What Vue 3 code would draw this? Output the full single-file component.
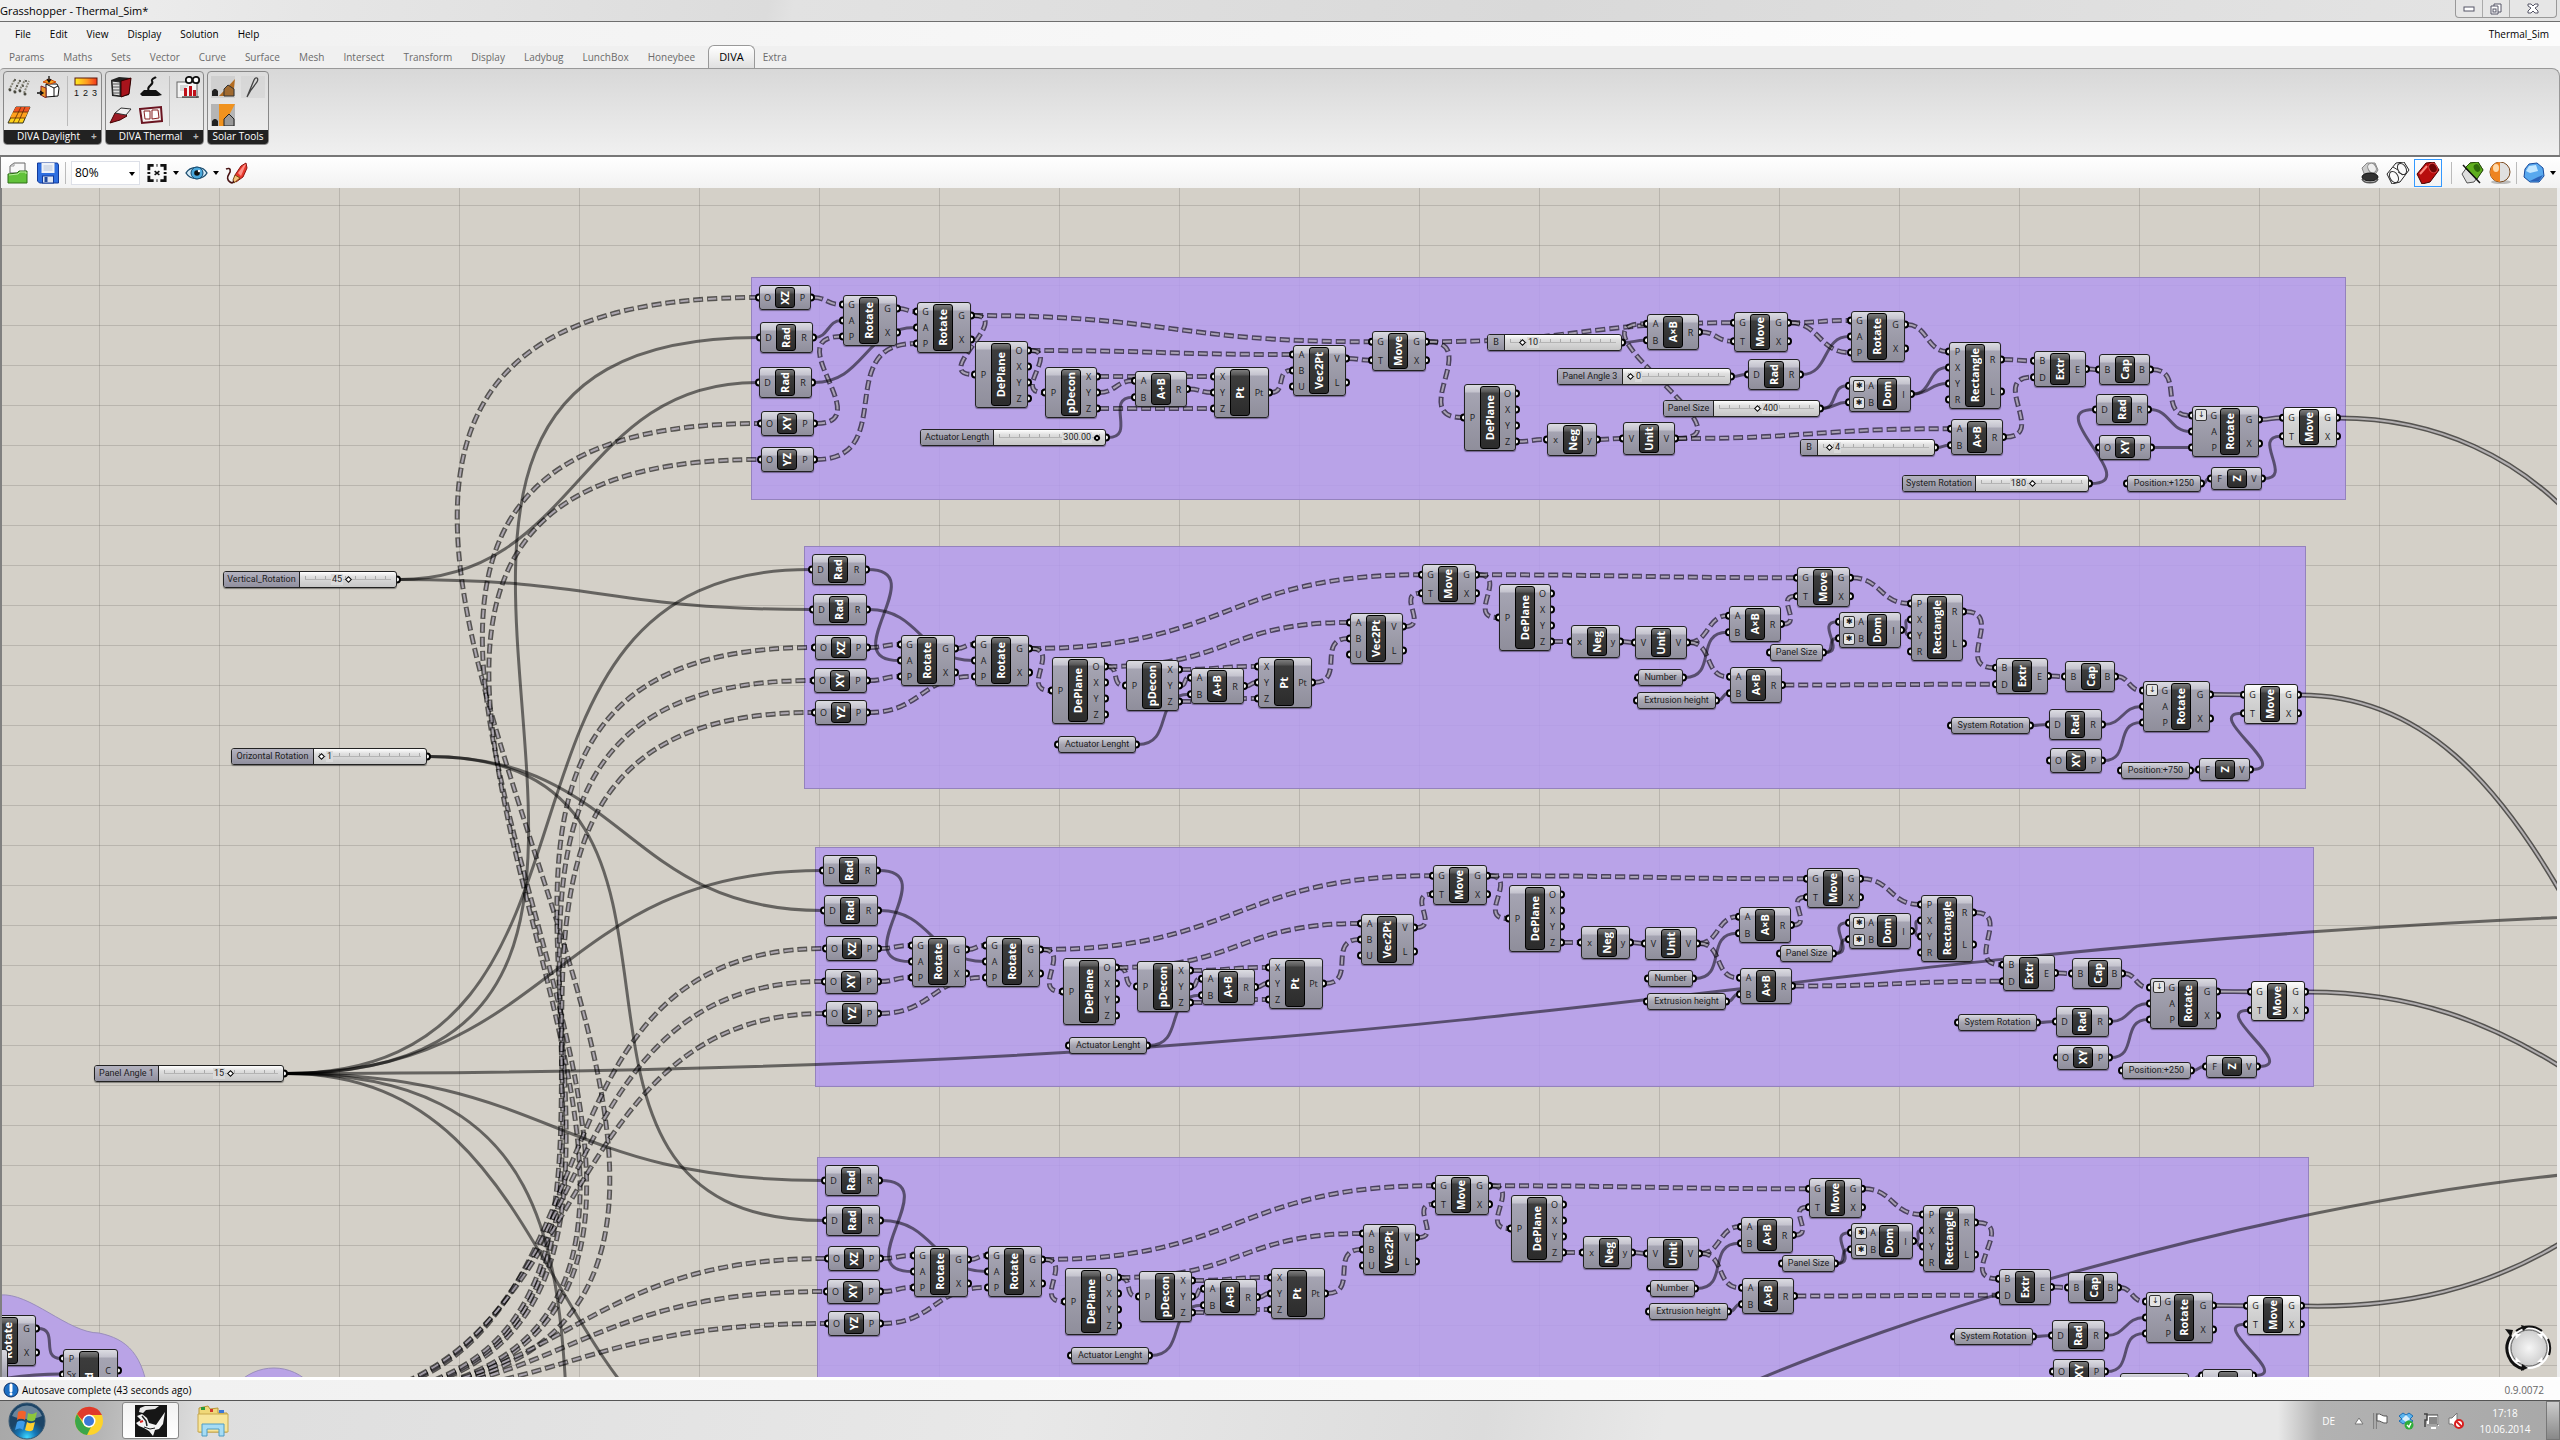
<script setup>
import { ref } from 'vue'

const menus = ['File', 'Edit', 'View', 'Display', 'Solution', 'Help']
const tabs = ['Params', 'Maths', 'Sets', 'Vector', 'Curve', 'Surface', 'Mesh', 'Intersect', 'Transform', 'Display', 'Ladybug', 'LunchBox', 'Honeybee', 'DIVA', 'Extra']
const zoom = ref('80%')

/* ---------- icon artwork (inner SVG, 24 x 22 box) ---------- */
const art = {
  sensors: '<g stroke="#8a897c" stroke-width="2" stroke-dasharray="2 1" fill="none"><path d="M2 14 8 3M7 16 13 4M12 15 18 4M17 17 22 5"/></g><g fill="#4a4a40"><circle cx="3" cy="14" r="1.4"/><circle cx="8" cy="16" r="1.5"/><circle cx="13" cy="15" r="1.4"/><circle cx="18" cy="18" r="1.5"/><circle cx="8" cy="4" r="1"/><circle cx="13" cy="5" r="1"/><circle cx="19" cy="5" r="1"/><circle cx="10" cy="10" r="1"/><circle cx="16" cy="10" r="1"/></g>',
  daybox: '<path d="M9 8 20 8 22 12 21 20 9 21Z" fill="#fff" stroke="#111"/><path d="M9 8 17 12 21 10M17 12V21" fill="none" stroke="#111"/><path d="M6 6 12 3 19 6 13 8Z" fill="#f5a623" stroke="#c40"/><path d="M4 10 9 12V22L4 19Z" fill="#e9962a" stroke="#822"/><path d="M12 0V5M10 3 12 6 14 3M0 17H5M3 15 6 17 3 19" stroke="#111" fill="none" stroke-width="1.3"/>',
  scale: '<defs><linearGradient id="sc"><stop stop-color="#ffee20"/><stop offset=".55" stop-color="#ff9a20"/><stop offset="1" stop-color="#f3361c"/></linearGradient></defs><rect x="1" y="2" width="22" height="7" fill="url(#sc)" stroke="#5a1a10"/><g font-size="9" font-family="Liberation Sans,sans-serif" fill="#111"><text x="0" y="20">1</text><text x="9" y="20">2</text><text x="18" y="20">3</text></g>',
  grid: '<path d="M9 3H23L16 19H1Z" fill="#ffd21a" stroke="#332"/><path d="M9 3H23L21 8H6Z" fill="#ee5522"/><path d="M6 8H21L18 14H3Z" fill="#ffa01c"/><path d="M14 3 6 19M18 3 11 19M6 8H21M3 14H18" stroke="#5c2a08" fill="none" stroke-width=".8"/>',
  book: '<path d="M2 4 10 1 22 2 20 19 12 21 3 20Z" fill="#222"/><path d="M12 5 22 2 20 18 12 21Z" fill="#a8141c" stroke="#300"/><path d="M3 5 11 6V20L4 19Z" fill="#ddd" stroke="#222"/><path d="M4 8H11M4 11H11M4 14H11M4 17H11" stroke="#555"/>',
  steam: '<path d="M5 14 17 14 23 19 19 20 3 20 1 18Z" fill="#111"/><path d="M10 15C6 10 16 9 13 5 12 3 16 2 17 1" stroke="#111" stroke-width="2" fill="none"/>',
  chart: '<rect x="1" y="6" width="20" height="16" fill="#f4f4f4" stroke="#666"/><path d="M4 10H12M4 12H10M4 14H10" stroke="#bbb"/><path d="M8 12H11V20H8ZM13 10H16V20H13ZM17 14H20V20H17Z" fill="#c0101a"/><circle cx="13" cy="4" r="3.2" fill="#fff" stroke="#111" stroke-width="1.8"/><circle cx="20" cy="4" r="3.2" fill="#fff" stroke="#111" stroke-width="1.8"/><path d="M6 21H23" stroke="#111"/>',
  brick: '<path d="M1 19 6 9 14 8 18 12 11 16Z" fill="#9c1a24" stroke="#400"/><path d="M6 9 12 4 22 5 17 11Z" fill="#efefef" stroke="#333"/>',
  window: '<path d="M1 5 22 3 23 17 3 19Z" fill="#f6f0f0" stroke="#6a1420" stroke-width="2"/><path d="M5 7 11 7V15L6 15ZM13 6H19L20 14 13 15Z" fill="#fff" stroke="#822"/>',
  solarA: '<rect width="24" height="22" fill="#c9c9c9" opacity=".7"/><path d="M24 3 22 20 8 20Z" fill="#b26c22"/><path d="M13 20V13L17 9 23 13V20Z" fill="#a06a30" stroke="#333"/><path d="M1 20V15L3 13H5L7 15V20Z" fill="#222"/>',
  needle: '<rect width="24" height="22" fill="#d2d2d2" opacity=".6"/><path d="M6 21 13 4C15 0 18 2 16 6L10 14 6 21Z" fill="none" stroke="#444" stroke-width="1.3"/>',
  solarB: '<rect width="24" height="24" fill="#b5b5b5"/><path d="M8 0H24L16 15 12 24 8 24Z" fill="#f0921e"/><path d="M13 22V15L18 10 23 15V22Z" fill="#999" stroke="#222"/><path d="M1 22V17L3 15H5L7 17V22Z" fill="#222"/>',
  open: '<path d="M3 11V4L7 1H18V11Z" fill="#f8f8f8" stroke="#666"/><path d="M7 1V4H3" fill="none" stroke="#999"/><path d="M1 21V12L10 11 12 9H20V21Z" fill="#62c23a" stroke="#2c6e16"/><path d="M2 13 11 12 13 10H19V12" stroke="#b9ee9c" fill="none"/>',
  save: '<path d="M1 1H21L22 3V21H3L1 19Z" fill="#2f6fe0" stroke="#123a9a"/><rect x="5" y="1" width="13" height="10" fill="#eef2f8"/><path d="M7 4H16M7 6H16M7 8H16" stroke="#b8c4d8"/><rect x="6" y="14" width="11" height="7" fill="#dfe6f2" stroke="#123a9a"/><rect x="8" y="15" width="3" height="5" fill="#224a9c"/>',
  fit: '<path d="M3 8V3H8M15 3H20V8M3 14V19H8M15 19H20V14M11 3H12M11 19H12M3 10V12M20 10V12" stroke="#111" stroke-width="3" fill="none"/><path d="M9 9 14 13M14 9 9 13" stroke="#111" stroke-width="1.6"/>',
  eye: '<path d="M1 11C5 4 18 3 22 11 18 18 6 19 1 11Z" fill="#d6ecf8" stroke="#1d4e70" stroke-width="1.4"/><circle cx="12" cy="11" r="6" fill="#4aa8dc" stroke="#14486e"/><circle cx="12" cy="11" r="2.8" fill="#111"/><circle cx="14" cy="9" r="1.2" fill="#fff"/>',
  pencil: '<path d="M10 13 16 4 21 1 22 6 18 15 11 20Z" fill="#e8382c" stroke="#8a1410"/><path d="M13 11 19 3 21 2 16 14Z" fill="#ff9088"/><path d="M10 13 15 16 9 21 8 18Z" fill="#f5c27a" stroke="#7a4a10"/><path d="M1 7C6 5 6 9 4 12S2 18 5 20 8 20 9 19" fill="none" stroke="#4a1414" stroke-width="1.6"/>',
  tubeDark: '<path d="M4 6 9 1 17 1 20 8 16 14H7Z" fill="#ccc" stroke="#888"/><ellipse cx="14" cy="6" rx="4" ry="5" transform="rotate(-30 14 6)" fill="#eee" stroke="#888"/><ellipse cx="12" cy="15" rx="8" ry="4" fill="#333" stroke="#111"/><path d="M4 17C6 22 18 22 20 17" fill="none" stroke="#555" stroke-width="1.5"/>',
  tubeWire: '<path d="M1 12 10 1 18 0 23 8 14 20 6 22Z" fill="#fafafa" stroke="#222"/><ellipse cx="16" cy="7" rx="4" ry="6" transform="rotate(-30 16 7)" fill="none" stroke="#333"/><ellipse cx="8" cy="15" rx="4" ry="6" transform="rotate(-30 8 15)" fill="none" stroke="#333"/><path d="M12 10 17 13M7 5 12 8" stroke="#333"/>',
  tubeRed: '<path d="M1 12 10 1 18 0 23 8 14 20 6 22Z" fill="#b80d0d" stroke="#400"/><ellipse cx="17" cy="6" rx="4" ry="5" transform="rotate(-30 17 6)" fill="#6e0505" stroke="#d44"/><path d="M4 12 11 4" stroke="#ff8a80" stroke-width="2"/>',
  tubeGreen: '<path d="M2 12 10 1 18 0 23 8 14 20 7 21Z" fill="#ddd" stroke="#555"/><path d="M5 6 10 1 18 0 23 8 17 17Z" fill="#5fae1e" stroke="#254d08"/><ellipse cx="17" cy="6" rx="3" ry="4" transform="rotate(-30 17 6)" fill="#2e6a0a"/><path d="M3 3 20 21" stroke="#111" stroke-width="1.5"/>',
  sphereHalf: '<ellipse cx="13" cy="20" rx="10" ry="2" fill="#bbb"/><circle cx="12" cy="10" r="10" fill="#e0e0e0" stroke="#7a4a20"/><path d="M12 0A10 10 0 0 0 12 20Z" fill="#ee8420"/><ellipse cx="8" cy="6" rx="3" ry="4" fill="#ffd9a8"/>',
  sphereBlue: '<path d="M7 2 15 1 21 6 22 14 17 20 8 20 2 15 3 7Z" fill="#58a8ee" stroke="#174a9c"/><path d="M7 4 14 3 16 9 8 11 4 9Z" fill="#c2e6ff"/><path d="M8 19 17 19 21 13 16 15Z" fill="#2c62b8"/>'
}

const panels = [
  { title: 'DIVA Daylight', plus: true, cols: [['sensors', 'grid'], ['daybox'], null, ['scale']] },
  { title: 'DIVA Thermal', plus: true, cols: [['book', 'brick'], ['steam', 'window'], null, ['chart']] },
  { title: 'Solar Tools', plus: false, cols: [['solarA', 'solarB'], ['needle']] }
]

/* ---------- canvas data, in screen coordinates ---------- */
const OX = 2
const OY = 188

const groups = [
  [751, 277, 1595, 223], [804, 546, 1502, 243], [815, 847, 1499, 240], [817, 1157, 1492, 300]
]

const nodes = []
const wires = []
const at = {}

function add(id, label, x, y, w, h, ins, outs, kind = 'c') {
  const n = { id, label, x, y, w, h, ins: ins ? ins.split(' ') : [], outs: outs ? outs.split(' ') : [], kind }
  nodes.push(n)
  at[id] = n
  return n
}
function slider(id, label, x, y, w, lw, value, knob, side, round) {
  Object.assign(add(id, label, x, y, w, 17, '', 'v', 's'), {
    lw, value, knob, side, round, pos: Math.round(((knob - lw - 8) / (w - lw - 17)) * 1000) / 10
  })
}
function portY(n, list, i) {
  return n.y + 1.5 + ((n.h - 3) * (i + 0.5)) / Math.max(list.length, 1)
}
const outP = (id, i = 0) => [at[id].x + at[id].w + 2, portY(at[id], at[id].outs, i)]
const inP = (id, i = 0) => [at[id].x - 2, portY(at[id], at[id].ins, i)]

function curve([x1, y1], [x2, y2], k = 0.72) {
  const c = Math.max(Math.abs(x2 - x1) / 2, Math.abs(y2 - y1) * k)
  return `M${x1} ${y1}C${x1 + c} ${y1} ${x2 - c} ${y2} ${x2} ${y2}`
}
function wire(a, b, type, k) {
  wires.push({ d: curve(a, b, k), type })
}
/* "from.out>to.in" pairs, separated by spaces */
function link(prefix, type, spec) {
  spec.split(' ').forEach((s) => {
    const [f, t] = s.split('>')
    const [fi, fo = 0] = f.split('.')
    const [ti, to = 0] = t.split('.')
    wire(outP(prefix + fi, +fo), inP(prefix + ti, +to), type)
  })
}

/* sliders that drive every row */
slider('VR', 'Vertical_Rotation', 223, 571, 174, 76, '45', 125, 'l')
slider('OR', 'Orizontal Rotation', 231, 748, 196, 82, '1', 90, 'r')
slider('PA', 'Panel Angle 1', 94, 1065, 190, 64, '15', 136, 'l')

/* first row */
add('a-xz', 'XZ', 759, 285, 52, 25, 'O', 'P')
add('a-r1', 'Rad', 760, 322, 53, 31, 'D', 'R')
add('a-r2', 'Rad', 759, 367, 53, 31, 'D', 'R')
add('a-xy', 'XY', 761, 411, 53, 25, 'O', 'P')
add('a-yz', 'YZ', 761, 447, 53, 25, 'O', 'P')
add('a-ro1', 'Rotate', 843, 295, 54, 51, 'G A P', 'G X')
add('a-ro2', 'Rotate', 917, 302, 54, 51, 'G A P', 'G X')
add('a-de', 'DePlane', 975, 341, 53, 67, 'P', 'O X Y Z')
add('a-pd', 'pDecon', 1045, 367, 52, 51, 'P', 'X Y Z')
add('a-pt', 'Pt', 1214, 367, 55, 51, 'X Y Z', 'Pt')
add('a-ab', 'A+B', 1135, 371, 52, 36, 'A B', 'R')
add('a-ve', 'Vec2Pt', 1293, 345, 53, 51, 'A B U', 'V L')
add('a-mo', 'Move', 1372, 331, 54, 40, 'G T', 'G X')
slider('a-al', 'Actuator Length', 920, 429, 186, 73, '300.00', 177, 'l', true)
add('a-d2', 'DePlane', 1464, 384, 52, 67, 'P', 'O X Y Z')
add('a-ne', 'Neg', 1547, 423, 50, 33, 'x', 'y')
add('a-un', 'Unit', 1623, 422, 52, 33, 'V', 'V')
slider('a-b1', 'B', 1487, 334, 135, 17, '10', 35, 'r')
slider('a-p3', 'Panel Angle 3', 1557, 368, 174, 65, '0', 73, 'r')
slider('a-ps', 'Panel Size', 1663, 400, 157, 50, '400', 94, 'r')
slider('a-b2', 'B', 1800, 439, 135, 17, '4', 29, 'r')
slider('a-sr', 'System Rotation', 1902, 475, 187, 73, '180', 130, 'l')
add('a-x1', 'A×B', 1647, 314, 52, 36, 'A B', 'R')
add('a-m2', 'Move', 1734, 312, 54, 40, 'G T', 'G X')
add('a-r3', 'Rad', 1748, 359, 52, 31, 'D', 'R')
add('a-ro3', 'Rotate', 1851, 311, 54, 51, 'G A P', 'G X')
add('a-do', 'Dom', 1849, 376, 62, 36, '*A *B', 'I')
add('a-re', 'Rectangle', 1949, 342, 52, 67, 'P X Y R', 'R L')
add('a-x2', 'A×B', 1951, 419, 52, 36, 'A B', 'R')
add('a-ex', 'Extr', 2034, 351, 52, 36, 'B D', 'E')
add('a-ca', 'Cap', 2099, 354, 51, 31, 'B', 'B')
add('a-r4', 'Rad', 2096, 394, 52, 31, 'D', 'R')
add('a-x3', 'XY', 2099, 435, 52, 25, 'O', 'P')
add('a-ro4', 'Rotate', 2192, 406, 67, 51, '↓G A P', 'G X')
add('a-m4', 'Move', 2283, 407, 54, 40, 'G T', 'G X', 'w')
add('a-z', 'Z', 2211, 467, 51, 23, 'F', 'V')
add('a-po', 'Position:+1250', 2127, 475, 74, 17, 'i', 'o', 'p')

link('a-', 'dash', 'xz>ro1 xy>ro1.2 yz>ro2.2 ro1>ro2 ro2>mo ro2>de de>ve de>pd pd>pt pd.1>ab ab>pt.1 pd.2>pt.2 pt>ve.1 ve>mo.1 mo>d2 mo>m2 un>x1 x1>m2.1 d2.3>ne ne>un un>x2 m2>ro3 m2>ro3.2 ro3>re x2>ex.1 re>ex ex>ca ca>ro4')
link('a-', 'solid', 'r1>ro1.1 r2>ro2.1 al>ab.1 b1>x1.1 p3>r3 r3>ro3.1 ps>do ps>do.1 do>re.1 do>re.2 b2>x2.1 sr>r4 r4>ro4.1 x3>ro4.2 po>z z>m4.1')
link('a-', 'double', 'ro4>m4')

/* the three rows below share one arrangement */
function row(p, dx, dy, mx, tx, ty, pos, px, py) {
  const l = (id, label, x, y, ...r) => add(p + id, label, x + dx, y + dy, ...r)
  const m = (id, label, x, y, ...r) => add(p + id, label, x + mx, y + dy, ...r)
  const t = (id, label, x, y, ...r) => add(p + id, label, x + tx, y + ty, ...r)
  l('r1', 'Rad', 812, 554, 54, 31, 'D', 'R')
  l('r2', 'Rad', 813, 594, 54, 31, 'D', 'R')
  l('xz', 'XZ', 815, 635, 52, 25, 'O', 'P')
  l('xy', 'XY', 814, 668, 53, 25, 'O', 'P')
  l('yz', 'YZ', 815, 700, 52, 25, 'O', 'P')
  l('ro1', 'Rotate', 901, 635, 54, 51, 'G A P', 'G X')
  l('ro2', 'Rotate', 975, 635, 54, 51, 'G A P', 'G X')
  l('de', 'DePlane', 1052, 657, 53, 67, 'P', 'O X Y Z')
  l('pd', 'pDecon', 1126, 660, 53, 51, 'P', 'X Y Z')
  l('ab', 'A+B', 1191, 668, 53, 36, 'A B', 'R')
  l('pt', 'Pt', 1258, 657, 54, 51, 'X Y Z', 'Pt')
  l('al', 'Actuator Lenght', 1058, 736, 78, 17, 'i', 'o', 'p')
  l('ve', 'Vec2Pt', 1350, 613, 53, 51, 'A B U', 'V L')
  l('mo', 'Move', 1422, 564, 54, 40, 'G T', 'G X')
  m('d2', 'DePlane', 1499, 584, 52, 67, 'P', 'O X Y Z')
  m('ne', 'Neg', 1571, 625, 49, 33, 'x', 'y')
  m('un', 'Unit', 1635, 626, 52, 33, 'V', 'V')
  m('x1', 'A×B', 1729, 606, 52, 36, 'A B', 'R')
  m('x2', 'A×B', 1730, 667, 52, 36, 'A B', 'R')
  m('nu', 'Number', 1638, 669, 45, 17, 'i', 'o', 'p')
  m('eh', 'Extrusion height', 1637, 692, 79, 17, 'i', 'o', 'p')
  m('ps', 'Panel Size', 1770, 644, 53, 17, 'i', 'o', 'p')
  m('do', 'Dom', 1839, 612, 62, 36, '*A *B', 'I')
  m('m2', 'Move', 1797, 567, 53, 40, 'G T', 'G X')
  m('re', 'Rectangle', 1911, 594, 52, 67, 'P X Y R', 'R L')
  t('ex', 'Extr', 1996, 658, 52, 36, 'B D', 'E')
  t('ca', 'Cap', 2065, 661, 50, 31, 'B', 'B')
  t('ro4', 'Rotate', 2143, 681, 67, 51, '↓G A P', 'G X')
  t('m4', 'Move', 2244, 684, 54, 40, 'G T', 'G X', 'w')
  t('r4', 'Rad', 2049, 709, 53, 31, 'D', 'R')
  t('x3', 'XY', 2050, 748, 52, 25, 'O', 'P')
  t('sr', 'System Rotation', 1951, 717, 79, 17, 'i', 'o', 'p')
  t('z', pos ? 'Z' : '', 2199, 758, 51, 23, pos ? 'F' : ' ', pos ? 'V' : ' ')
  add(p + 'po', pos, px, py, 69, 17, 'i', 'o', 'p')
  link(p, 'dash', 'xz>ro1 xy>ro1.2 yz>ro2.2 ro1>ro2 ro2>mo ro2>de de>pd de>ve pd>pt pd.1>ab ab>pt.1 pd.2>pt.2 pt>ve.1 ve>mo.1 mo>d2 mo>m2 d2.3>ne ne>un un>x1 un>x2 x1>m2.1 m2>re re>ex x2>ex.1 ex>ca ca>ro4')
  link(p, 'solid', 'r1>ro1.1 r2>ro2.1 al>ab.1 nu>x1.1 eh>x2.1 ps>do ps>do.1 do>re.1 do>re.2 sr>r4 r4>ro4.1 x3>ro4.2 po>z z>m4.1')
  link(p, 'double', 'ro4>m4')
}
row('b-', 0, 0, 0, 0, 0, 'Position:+750', 2121, 762)
row('c-', 11, 301, 10, 7, 297, 'Position:+250', 2122, 1062)
row('d-', 13, 611, 12, 3, 611, '', 2120, 1373)

/* fragments in the lower left corner */
add('e-ro', 'Rotate', -18, 1315, 54, 51, '  ', 'G X')
add('e-gr', 'SqGrid', 63, 1349, 55, 83, 'P Sx   ', 'C ')
add('e-pl', '', -30, 1349, 38, 51, '', '', 'p')
link('e-', 'solid', 'ro>gr')
wires.push({ d: 'M8 1378C28 1375 40 1374 61 1374', type: 'solid' })

/* base planes, entering from below */
const base = [310, 1400]
;['a-', 'b-', 'c-', 'd-'].forEach((p) => ['xz', 'xy', 'yz'].forEach((n) => wire(base, inP(p + n), 'dash', 0.73)))

const PA = outP('PA')
const OR = outP('OR')
const VR = outP('VR')
wire(PA, inP('a-r1'), 'solid')
wire(VR, inP('a-r2'), 'solid')
wire(PA, inP('b-r1'), 'solid')
wire(VR, inP('b-r2'), 'solid')
wire(PA, inP('c-r1'), 'solid')
wire(OR, inP('c-r2'), 'solid')
wire(PA, inP('d-r1'), 'solid')
wire(OR, inP('d-r2'), 'solid')
wire(PA, [828, 1490], 'solid')
wire(PA, [850, 1790], 'solid', 0.74)
wire(PA, [3195, 904], 'solid')
wires.push({ d: 'M1734 1390C1890 1320 2240 1208 2570 1174', type: 'solid' })
wires.push({ d: 'M2339 418C2440 418 2520 460 2575 520', type: 'double' })
wires.push({ d: 'M2300 695C2420 695 2500 780 2575 918', type: 'double' })
wires.push({ d: 'M2308 992C2410 992 2490 1020 2575 1076', type: 'double' })
wires.push({ d: 'M2304 1306C2400 1308 2490 1290 2575 1234', type: 'double' })

const grips = nodes.flatMap((n) => [
  ...n.ins.map((_, i) => [n.x, portY(n, n.ins, i)]),
  ...n.outs.map((_, i) => [n.x + n.w, portY(n, n.outs, i)])
])

const box = (x, y, w, h) => ({ left: x - OX + 'px', top: y - OY + 'px', width: w + 'px', height: h + 'px' })
const isIcon = (s) => s[0] === '*' || s[0] === '↓'
</script>

<template>
  <div class="app">
    <header class="title">
      <span>Grasshopper - Thermal_Sim*</span>
      <div class="winbtns">
        <button aria-label="Minimize"><svg width="12" height="6"><rect x="1" y="1" width="10" height="4" fill="#fff" stroke="#556" /></svg></button>
        <button aria-label="Restore"><svg width="12" height="12"><path d="M4 1H11V9H8V11H1V3H4Z" fill="#fff" stroke="#556" /><path d="M4 3H8V9" fill="none" stroke="#556" /><rect x="3" y="6" width="3" height="3" fill="none" stroke="#556" /></svg></button>
        <button aria-label="Close" class="close"><svg width="12" height="11"><path d="M1 1H4L6 3 8 1H11V3L8 5 11 8V10H8L6 8 4 10H1V8L4 5 1 3Z" fill="#fff" stroke="#556" /></svg></button>
      </div>
    </header>

    <nav class="menu">
      <button v-for="m in menus" :key="m">{{ m }}</button>
      <span class="doc">Thermal_Sim</span>
    </nav>

    <nav class="tabs">
      <button v-for="t in tabs" :key="t" :class="{ on: t === 'DIVA' }">{{ t }}</button>
    </nav>

    <section class="ribbon">
      <div v-for="p in panels" :key="p.title" class="panel">
        <div class="tools">
          <template v-for="(c, i) in p.cols" :key="i">
            <div v-if="c" class="col">
              <button v-for="k in c" :key="k" :aria-label="k"><svg width="24" height="22" viewBox="0 0 24 22" v-html="art[k]" /></button>
            </div>
            <i v-else class="rule" />
          </template>
        </div>
        <div class="cap"><span>{{ p.title }}</span><b v-if="p.plus">+</b></div>
      </div>
    </section>

    <section class="bar">
      <button aria-label="Open"><svg width="22" height="22" viewBox="0 0 22 22" v-html="art.open" /></button>
      <button aria-label="Save" class="gap"><svg width="24" height="22" viewBox="0 0 23 22" v-html="art.save" /></button>
      <i class="rule" />
      <label class="zoom">
        <select v-model="zoom" aria-label="Zoom"><option>80%</option><option>100%</option></select>
        <i class="caret" />
      </label>
      <button aria-label="Zoom extents"><svg width="22" height="22" viewBox="0 0 23 22" v-html="art.fit" /></button>
      <i class="caret" />
      <button aria-label="Preview"><svg width="23" height="22" viewBox="0 0 23 22" v-html="art.eye" /></button>
      <i class="caret" />
      <button aria-label="Sketch"><svg width="23" height="22" viewBox="0 0 23 22" v-html="art.pencil" /></button>
      <div class="right">
        <button aria-label="No preview"><svg width="24" height="22" viewBox="0 0 24 22" v-html="art.tubeDark" /></button>
        <button aria-label="Wireframe preview"><svg width="24" height="22" viewBox="0 0 24 22" v-html="art.tubeWire" /></button>
        <button aria-label="Shaded preview" class="sel"><svg width="24" height="22" viewBox="0 0 24 22" v-html="art.tubeRed" /></button>
        <i class="rule wider" />
        <button aria-label="Selected only"><svg width="24" height="22" viewBox="0 0 24 22" v-html="art.tubeGreen" /></button>
        <button aria-label="Preview settings"><svg width="24" height="22" viewBox="0 0 24 22" v-html="art.sphereHalf" /></button>
        <i class="rule" />
        <button aria-label="Mesh quality"><svg width="24" height="22" viewBox="0 0 24 22" v-html="art.sphereBlue" /></button>
        <i class="caret" />
      </div>
    </section>

    <main class="canvas">
      <div v-for="(g, i) in groups" :key="'g' + i" class="group" :style="box(...g)" />
      <svg class="wires" width="100%" height="100%">
        <g :transform="`translate(${-OX} ${-OY})`">
          <path d="M0 1295C30 1292 68 1333 99 1333 127 1339 144 1354 149 1400H0Z" class="blob" />
          <path d="M235 1386C256 1362 292 1362 312 1386Z" class="blob" />
          <template v-for="(w, i) in wires" :key="i">
            <path :d="w.d" :class="w.type" />
            <path v-if="w.type !== 'solid'" :d="w.d" :class="w.type + '-in'" />
          </template>
          <circle v-for="(g, i) in grips" :key="'c' + i" :cx="g[0]" :cy="g[1]" r="3" class="grip" />
        </g>
      </svg>

      <template v-for="n in nodes" :key="n.id">
        <div v-if="n.kind === 'p'" class="node pill" :style="box(n.x, n.y, n.w, n.h)">{{ n.label }}</div>
        <div v-else-if="n.kind === 's'" class="node slider" :style="box(n.x, n.y, n.w, n.h)">
          <label :for="n.id" :style="{ width: n.lw + 'px' }">{{ n.label }}</label>
          <input :id="n.id" type="range" min="0" max="100" step="any" :value="n.pos" :class="{ round: n.round }" />
          <output :for="n.id" :style="n.side === 'l' ? { right: n.w - n.knob + 4 + 'px' } : { left: n.knob + 4 + 'px' }">{{ n.value }}</output>
        </div>
        <div v-else class="node comp" :class="{ white: n.kind === 'w', wide: n.w > 60 }" :style="box(n.x, n.y, n.w, n.h)">
          <div class="ports ins">
            <span v-for="(p, i) in n.ins" :key="i"><i v-if="isIcon(p)" class="mini">{{ p[0] === '*' ? '✱' : '↓' }}</i>{{ isIcon(p) ? p.slice(1) : p }}</span>
          </div>
          <div class="name"><b>{{ n.label }}</b></div>
          <div class="ports outs"><span v-for="(p, i) in n.outs" :key="i">{{ p }}</span></div>
        </div>
      </template>

      <svg class="compass" width="48" height="46" viewBox="0 0 48 46">
        <defs><radialGradient id="cg"><stop offset="0" stop-color="#f6f6f6" /><stop offset="1" stop-color="#c9c9c9" /></radialGradient></defs>
        <circle cx="25" cy="23" r="20" fill="url(#cg)" stroke="#fff" stroke-width="2" />
        <circle cx="25" cy="23" r="18" fill="none" stroke="#666" />
        <path d="M7 11A21 21 0 0 0 20 44" fill="none" stroke="#111" stroke-width="3" />
        <path d="M12 6A21 21 0 0 1 38 6M44 14A21 21 0 0 1 45 30" fill="none" stroke="#111" stroke-width="2" />
        <path d="M1 4 9 5 7 12ZM17 0 24 2 19 6ZM17 46 24 43 18 39Z" fill="#111" />
        <path d="M12 14 17 9 11 9ZM38 14 33 9 39 9ZM12 32 17 37 11 37ZM38 32 33 37 39 37Z" fill="#fff" />
      </svg>
    </main>

    <footer class="status">
      <svg width="16" height="16" viewBox="0 0 16 16"><circle cx="8" cy="8" r="7" fill="#1c6fc4" stroke="#0a2f66" /><path d="M8 3V9" stroke="#fff" stroke-width="3" stroke-linecap="round" /><circle cx="8" cy="12" r="1.5" fill="#fff" /></svg>
      <span>Autosave complete (43 seconds ago)</span>
      <span class="ver">0.9.0072</span>
    </footer>

    <footer class="task">
      <button aria-label="Start" class="start">
        <svg width="38" height="38" viewBox="0 0 38 38">
          <defs><radialGradient id="orb" cy=".95"><stop offset="0" stop-color="#3fd8ff" /><stop offset=".5" stop-color="#1478b8" /><stop offset="1" stop-color="#1c4466" /></radialGradient></defs>
          <circle cx="19" cy="19" r="18" fill="url(#orb)" stroke="#3a5a74" />
          <path d="M4 14A16 16 0 0 1 34 14C26 18 12 18 4 14Z" fill="#fff" opacity=".35" />
          <path d="M10 10C13 8 16 9 18 10L17 18C14 16 11 17 9 18Z" fill="#f2622a" /><path d="M20 11C23 13 26 12 29 10L27 18C24 20 21 19 19 18Z" fill="#8cc63c" />
          <path d="M9 20C12 18 15 19 17 20L15 28C13 26 10 26 7 28Z" fill="#3d9be8" /><path d="M19 20C22 22 25 21 27 20L25 28C22 30 19 29 17 28Z" fill="#ffcf2e" />
        </svg>
      </button>
      <button aria-label="Chrome" class="chrome">
        <svg width="30" height="30" viewBox="0 0 30 30"><circle cx="15" cy="15" r="14" fill="#fdd32a" /><path d="M3 8A14 14 0 0 1 28 9H15A6 6 0 0 0 9 15Z" fill="#df3a2c" /><path d="M3 8 10 19A6 6 0 0 0 17 21L13 29A14 14 0 0 1 3 8Z" fill="#3aa64a" /><circle cx="15" cy="15" r="6.5" fill="#fff" /><circle cx="15" cy="15" r="5" fill="#3b78d8" /></svg>
      </button>
      <button aria-label="Rhinoceros" class="rhino">
        <svg width="32" height="32" viewBox="0 0 32 32"><rect width="32" height="32" fill="#161616" /><path d="M5 3 10 1 24 1 20 4 11 5 8 8 4 7Z" fill="#e8e8e8" /><path d="M2 11 7 9 12 13 14 18 21 20 30 7 28 19 24 24 20 25 18 31 14 26 9 23 4 21 1 18 6 15Z" fill="#f4f4f4" /><path d="M7 11 11 16 12 21" fill="none" stroke="#222" stroke-width="1.5" /><path d="M5 17 8 16" stroke="#d22" stroke-width="2" /><path d="M9 22 15 24 20 23" stroke="#222" fill="none" /></svg>
      </button>
      <button aria-label="Explorer" class="folder">
        <svg width="34" height="32" viewBox="0 0 34 32"><path d="M3 3 12 1 14 4 22 3V8H31V27H3Z" fill="#f0d878" stroke="#b8973a" /><path d="M5 2H9V5H5Z" fill="#2a9a3a" /><path d="M14 4H17V7H14Z" fill="#d23a2a" /><path d="M23 5H28V8H23Z" fill="#3a78d8" /><path d="M2 9H32V27H2Z" fill="#f7e59a" stroke="#c8a84c" /><path d="M6 19H28V31H23V24H11V31H6Z" fill="#a6dcf4" stroke="#4f9cc4" /></svg>
      </button>
      <div class="tray">
        <span class="lang">DE</span>
        <svg width="10" height="8"><path d="M5 1 9 7H1Z" fill="#fff" stroke="#777" /></svg>
        <svg width="16" height="18" viewBox="0 0 16 18"><path d="M2 1V17" stroke="#555" stroke-width="3" /><path d="M2 1V17" stroke="#fff" /><path d="M4 2C8 1 9 5 14 4V11C9 12 8 8 4 9Z" fill="#fff" stroke="#555" /></svg>
        <svg width="16" height="18" viewBox="0 0 16 18"><path d="M5 1 8 3 11 1 15 4 12 7 15 9 11 12 8 10 5 12 1 9 4 7 1 4Z" fill="#5ab4ee" stroke="#1f6fb4" /><path d="M8 3 12 7 8 10 4 7Z" fill="#d8eefb" /><circle cx="11" cy="13" r="4.5" fill="#2fae3a" /><path d="M9 13 11 15 13 11" stroke="#fff" fill="none" stroke-width="1.4" /></svg>
        <svg width="16" height="18" viewBox="0 0 16 18"><path d="M5 4H15V13H5ZM8 16H13" fill="#888" stroke="#fff" stroke-width="2" /><path d="M1 2H4V8H2V15" fill="none" stroke="#444" stroke-width="1.5" /><path d="M4 3H15V13H4" fill="none" stroke="#444" /></svg>
        <svg width="16" height="18" viewBox="0 0 16 18"><path d="M1 6H4L9 1V16L4 12H1Z" fill="#fff" stroke="#777" /><circle cx="11" cy="12" r="4" fill="#fff" stroke="#d81e1e" stroke-width="2" /><path d="M8 9 14 15" stroke="#d81e1e" stroke-width="2" /></svg>
        <div class="clock"><span>17:18</span><span>10.06.2014</span></div>
        <button aria-label="Show desktop" class="desk" />
      </div>
    </footer>
  </div>
</template>

<style>
body { margin: 0; }
</style>

<style scoped>
.app { display: flex; flex-direction: column; height: 100vh; overflow: hidden; background: #f0f0f0; color: #000; font: 10px/16px "Open Sans", sans-serif; }
button { margin: 0; padding: 0; border: 0; background: none; font: inherit; color: inherit; }
svg { display: block; }

.title { display: flex; height: 21px; flex: none; border-bottom: 1px solid #6e6e6e; background: linear-gradient(100deg, #f0f0f0 0, #e6e6e6 12%, #dcdcdc 30%, #e2e2e2 31%, #d9d9d9 60%, #e4e4e4 100%); font-size: 11px; line-height: 21px; }
.winbtns { display: flex; height: 17px; margin: 0 3px 0 auto; border: 1px solid #999; border-top: 0; border-radius: 0 0 4px 4px; background: #e6e6e6; }
.winbtns button { display: flex; align-items: center; justify-content: center; width: 27px; border-right: 1px solid #aaa; }
.winbtns .close { width: 46px; border: 0; }

.menu { display: flex; flex: none; height: 24px; padding: 0 11px 0 6px; background: linear-gradient(90deg, #f0f0f0, #fcfcfc 75%); line-height: 24px; }
.menu button { padding: 0 10px 0 9px; }
.doc { margin-left: auto; }

.tabs { display: flex; flex: none; height: 22px; align-items: flex-end; color: #6b6b6b; position: relative; z-index: 1; }
.tabs button { height: 22px; padding: 0 10px 0 9px; line-height: 23px; }
.tabs .on { height: 23px; margin: 0 -1px 0 3px; padding: 0 10px; border: 1px solid #999; border-bottom: 0; border-radius: 6px 6px 0 0; background: linear-gradient(#fff, #e0e0e0); color: #000; font-size: 11px; line-height: 18px; }

.ribbon { display: flex; gap: 3px; flex: none; height: 84px; padding: 2px 0 0 3px; border: 1px solid #999; border-width: 1px 1px 0 0; border-radius: 4px 8px 0 0; background: linear-gradient(#d8d8d8, #f0f0f0); }
.panel { display: flex; flex-direction: column; height: 72px; border: 1px solid #888; border-radius: 4px; background: linear-gradient(#dcdcdc, #f0f0f0); overflow: hidden; }
.tools { display: flex; flex: 1; gap: 6px; padding: 4px 3px 0; }
.col { display: flex; flex-direction: column; gap: 6px; }
.tools .rule { width: 1px; margin: 0 0 4px; background: #bbb; }
.cap { display: flex; height: 14px; padding: 0 2px; background: #222; color: #fff; line-height: 13px; }
.cap span { flex: 1; text-align: center; }
.cap b { width: 8px; color: #bbb; }

.bar { display: flex; align-items: center; flex: none; height: 31px; padding: 0 4px 0 6px; border-top: 2px solid #777; background: linear-gradient(#fff, #f2f2f2); border-left: 1px solid #777; gap: 2px; }
.bar .gap { margin-left: 5px; }
.bar .rule { width: 1px; height: 22px; margin: 0 3px; background: #bbb; }
.caret { width: 0; height: 0; border: 3px solid transparent; border-top: 4px solid #000; border-bottom: 0; margin: 0 4px 0 3px; }
.zoom { position: relative; width: 69px; margin-right: 4px; }
.zoom select { width: 69px; height: 24px; padding: 0 3px; border: 1px solid #dde0e8; background: #fff; font: 12px "Open Sans", sans-serif; appearance: none; }
.zoom .caret { position: absolute; right: 1px; top: 11px; }
.right { display: flex; align-items: center; gap: 4px; margin-left: auto; }
.right .caret { margin: 0; }
.right .rule { margin: 0 1px 0 0; }
.right .wider { margin: 0 4px 0 5px; }
.right .sel { padding: 2px 1px; border: 1px solid #3399ff; }

.canvas { position: relative; flex: 1; min-height: 0; overflow: hidden; border-left: 2px solid #808080; border-right: 3px solid #eee;
  background: linear-gradient(90deg, rgba(0,0,0,.13) 1px, transparent 1px) 97px 0 / 120px 40px, linear-gradient(rgba(0,0,0,.13) 1px, transparent 1px) 0 17px / 120px 40px, #d4d0c8; }
.group { position: absolute; box-sizing: border-box; background: rgba(180, 155, 238, .86); border: 1px solid #9482bd; }
.wires { position: absolute; inset: 0; }
.wires path { fill: none; }
.wires .blob { fill: #b9a3e6; stroke: #9a8ebc; }
.solid { stroke: rgba(0, 0, 0, .52); stroke-width: 3; }
.dash { stroke: rgba(0, 0, 0, .6); stroke-width: 5; stroke-dasharray: 10 4; }
.dash-in { stroke: rgba(210, 202, 216, .7); stroke-width: 2; stroke-dasharray: 8 6; stroke-dashoffset: -1; }
.double { stroke: rgba(0, 0, 0, .6); stroke-width: 5; }
.double-in { stroke: rgba(210, 205, 210, .75); stroke-width: 2; }
.grip { fill: #fff; stroke: #000; stroke-width: 2; }

.node { position: absolute; box-sizing: border-box; border: 1px solid #222; border-radius: 3px; background: linear-gradient(#dcdce2 0, #c4c3ce 7px, #a5a4b2 8px, #8f8e9b 100%); box-shadow: 0 1px 1px rgba(0, 0, 0, .4); font: 9px/11px Roboto, sans-serif; color: #1c1c1c; white-space: nowrap; }
.comp { display: flex; padding: 0; }
.white { background: linear-gradient(#fdfdfd, #e8e8e8 8px, #d8d8d8 9px, #c4c4c4); }
.ports { display: flex; flex-direction: column; font: 9px/11px "Open Sans", sans-serif; }
.ports span { display: flex; flex: 1; align-items: center; justify-content: center; }
.ins { width: 15px; }
.outs { flex: 1; }
.wide .ins { width: 27px; }
.wide .ins span { justify-content: flex-end; padding-right: 3px; }
.mini { width: 10px; height: 10px; margin-right: 3px; border: 1px solid #333; border-radius: 2px; background: #e4e4e4; font: 8px/10px "DejaVu Sans", sans-serif; text-align: center; }
.name { display: flex; align-items: center; justify-content: center; width: 18px; margin: 1px 0; border: 1px solid #000; border-radius: 3px; background: linear-gradient(#7c7c7c, #555 5px, #3c3c3c 6px, #2c2c2c); color: #fff; overflow: hidden; }
.name b { writing-mode: vertical-rl; text-orientation: sideways; transform: rotate(180deg); font: bold 11px/16px "Open Sans", sans-serif; }
.pill { text-align: center; line-height: 15px; background: linear-gradient(#d8d8de, #a6a5b2 50%, #94939f); }
.slider { display: flex; background: linear-gradient(#fff, #dedede 5px, #c6c6c6); }
.slider label { flex: none; box-sizing: border-box; border-right: 1px solid #222; border-radius: 2px 0 0 2px; background: linear-gradient(#b4b3c0, #908f9e); text-align: center; line-height: 15px; }
.slider input { flex: 1; min-width: 0; height: 15px; margin: 0 5px; appearance: none; background: repeating-linear-gradient(90deg, #aaa 0 1px, transparent 1px 10px) 0 4px / 100% 3px no-repeat, linear-gradient(#b4b4b4, #b4b4b4) 0 7px / 100% 1px no-repeat; }
.slider input::-webkit-slider-thumb { appearance: none; width: 5px; height: 5px; border: 1px solid #000; background: #fff; box-sizing: border-box; transform: rotate(45deg); }
.slider .round::-webkit-slider-thumb { border-radius: 3px; border-width: 2px; width: 6px; height: 6px; }
.slider output { position: absolute; z-index: 1; top: 2px; padding: 0 1px; background: #dadada; }
.compass { position: absolute; right: 5px; bottom: 6px; }

.status { display: flex; align-items: center; flex: none; gap: 3px; height: 20px; padding: 0 16px 0 3px; border-top: 3px solid #fff; border-bottom: 1px solid #555; background: linear-gradient(90deg, #f0f0f0, #fdfdfd); }
.ver { margin-left: auto; color: #666; }
.task { display: flex; align-items: center; flex: none; height: 39px; background: linear-gradient(100deg, #a8a8a8 0, #b4b4b4 4%, #dedede 8%, #e8e8e8 40%, #dcdcdc 58%, #e8e8e8 65%, #e8e8e8 100%); }
.start { margin-left: 8px; }
.chrome { margin-left: 28px; }
.rhino { display: flex; align-items: center; justify-content: center; width: 57px; height: 37px; margin-left: 18px; border: 1px solid #888; border-radius: 3px; background: linear-gradient(#f2f2f2, #fff); }
.folder { margin-left: 17px; }
.tray { display: flex; align-items: center; gap: 9px; height: 39px; margin-left: auto; padding-left: 44px; background: linear-gradient(90deg, transparent, #b2b2b2 40px, #a8a8a8); color: #fff; }
.lang { margin-right: 10px; }
.clock { display: flex; flex-direction: column; width: 64px; text-align: center; }
.desk { width: 14px; height: 39px; border: 1px solid #777; background: linear-gradient(#ccc, #888); }
</style>
